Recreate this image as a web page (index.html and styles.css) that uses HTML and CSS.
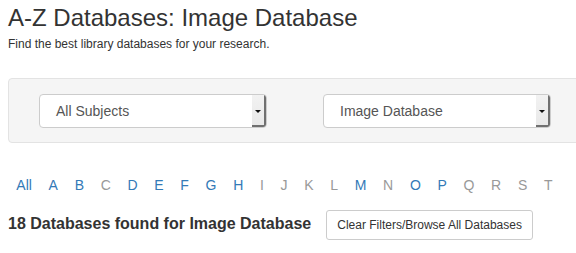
FILE: index.html
```html
<!DOCTYPE html>
<html lang="en">
<head>
  <meta charset="UTF-8" />
  <title>A-Z Databases: Image Database</title>
  <link rel="stylesheet" href="styles.css">
</head>
<body>
  <div class="page">
    <h1>A-Z Databases: Image Database</h1>
    <p class="lead">Find the best library databases for your research.</p>

    <div class="filters">
      <div class="select">
        <span class="select-text">All Subjects</span>
        <span class="select-arrow"></span>
      </div>
      <div class="select">
        <span class="select-text">Image Database</span>
        <span class="select-arrow"></span>
      </div>
    </div>

    <div class="letters">
      <a href="#">All</a>
      <a href="#">A</a>
      <a href="#">B</a>
      <span>C</span>
      <a href="#">D</a>
      <a href="#">E</a>
      <a href="#">F</a>
      <a href="#">G</a>
      <a href="#">H</a>
      <span>I</span>
      <span>J</span>
      <span>K</span>
      <span>L</span>
      <a href="#">M</a>
      <span>N</span>
      <a href="#">O</a>
      <a href="#">P</a>
      <span>Q</span>
      <span>R</span>
      <span>S</span>
      <span>T</span>
    </div>

    <div class="results">
      <h2>18 Databases found for Image Database</h2>
      <button class="btn-clear">Clear Filters/Browse All Databases</button>
    </div>
  </div>
</body>
</html>
```

FILE: styles.css
```css
* {
  box-sizing: border-box;
}

html, body {
  overflow: hidden;
}

body {
  margin: 0;
  font-family: "Liberation Sans", Arial, Helvetica, sans-serif;
  color: #333;
  background: #fff;
}

.page {
  padding: 0 8px;
}

h1 {
  margin: 3px 0 0;
  font-size: 24px;
  line-height: 30px;
  font-weight: normal;
  color: #333;
}

.lead {
  margin: 3px 0 0;
  font-size: 12px;
  line-height: 17px;
}

.filters {
  margin-top: 25px;
  width: 640px;
  display: flex;
  gap: 56px;
  padding: 15px 0 14px 30px;
  background-color: #f5f5f5;
  border: 1px solid #e3e3e3;
  border-radius: 4px;
}

.select {
  width: 228px;
  height: 34px;
  display: flex;
  background: #fff;
  border: 1px solid #ccc;
  border-radius: 4px;
  overflow: hidden;
}

.select-text {
  flex-grow: 1;
  padding-left: 16px;
  font-size: 14px;
  line-height: 32px;
  color: #555;
}

.select-arrow {
  width: 14px;
  display: flex;
  justify-content: center;
  align-items: center;
  background: linear-gradient(#f2f2f2, #e8e8e8);
  box-shadow: inset -2px -2px 0 #707070;
}

.select-arrow::before {
  content: "";
  border-left: 3px solid transparent;
  border-right: 3px solid transparent;
  border-top: 3px solid #111;
  margin-right: 2px;
}

.letters {
  margin-top: 32px;
  display: flex;
  font-size: 14px;
  line-height: 20px;
  white-space: nowrap;
}

.letters a,
.letters span {
  padding: 0 8.35px;
}

.letters a {
  color: #337ab7;
  text-decoration: none;
}

.letters span {
  color: #999;
}

.results {
  margin-top: 15px;
  display: flex;
  align-items: baseline;
  gap: 15px;
}

.results h2 {
  margin: 0;
  font-size: 16px;
  line-height: 20px;
  font-weight: bold;
}

.btn-clear {
  font-family: inherit;
  font-size: 12px;
  line-height: 18px;
  padding: 5px 10px;
  color: #333;
  background: #fff;
  border: 1px solid #ccc;
  border-radius: 3px;
  cursor: pointer;
}
```
